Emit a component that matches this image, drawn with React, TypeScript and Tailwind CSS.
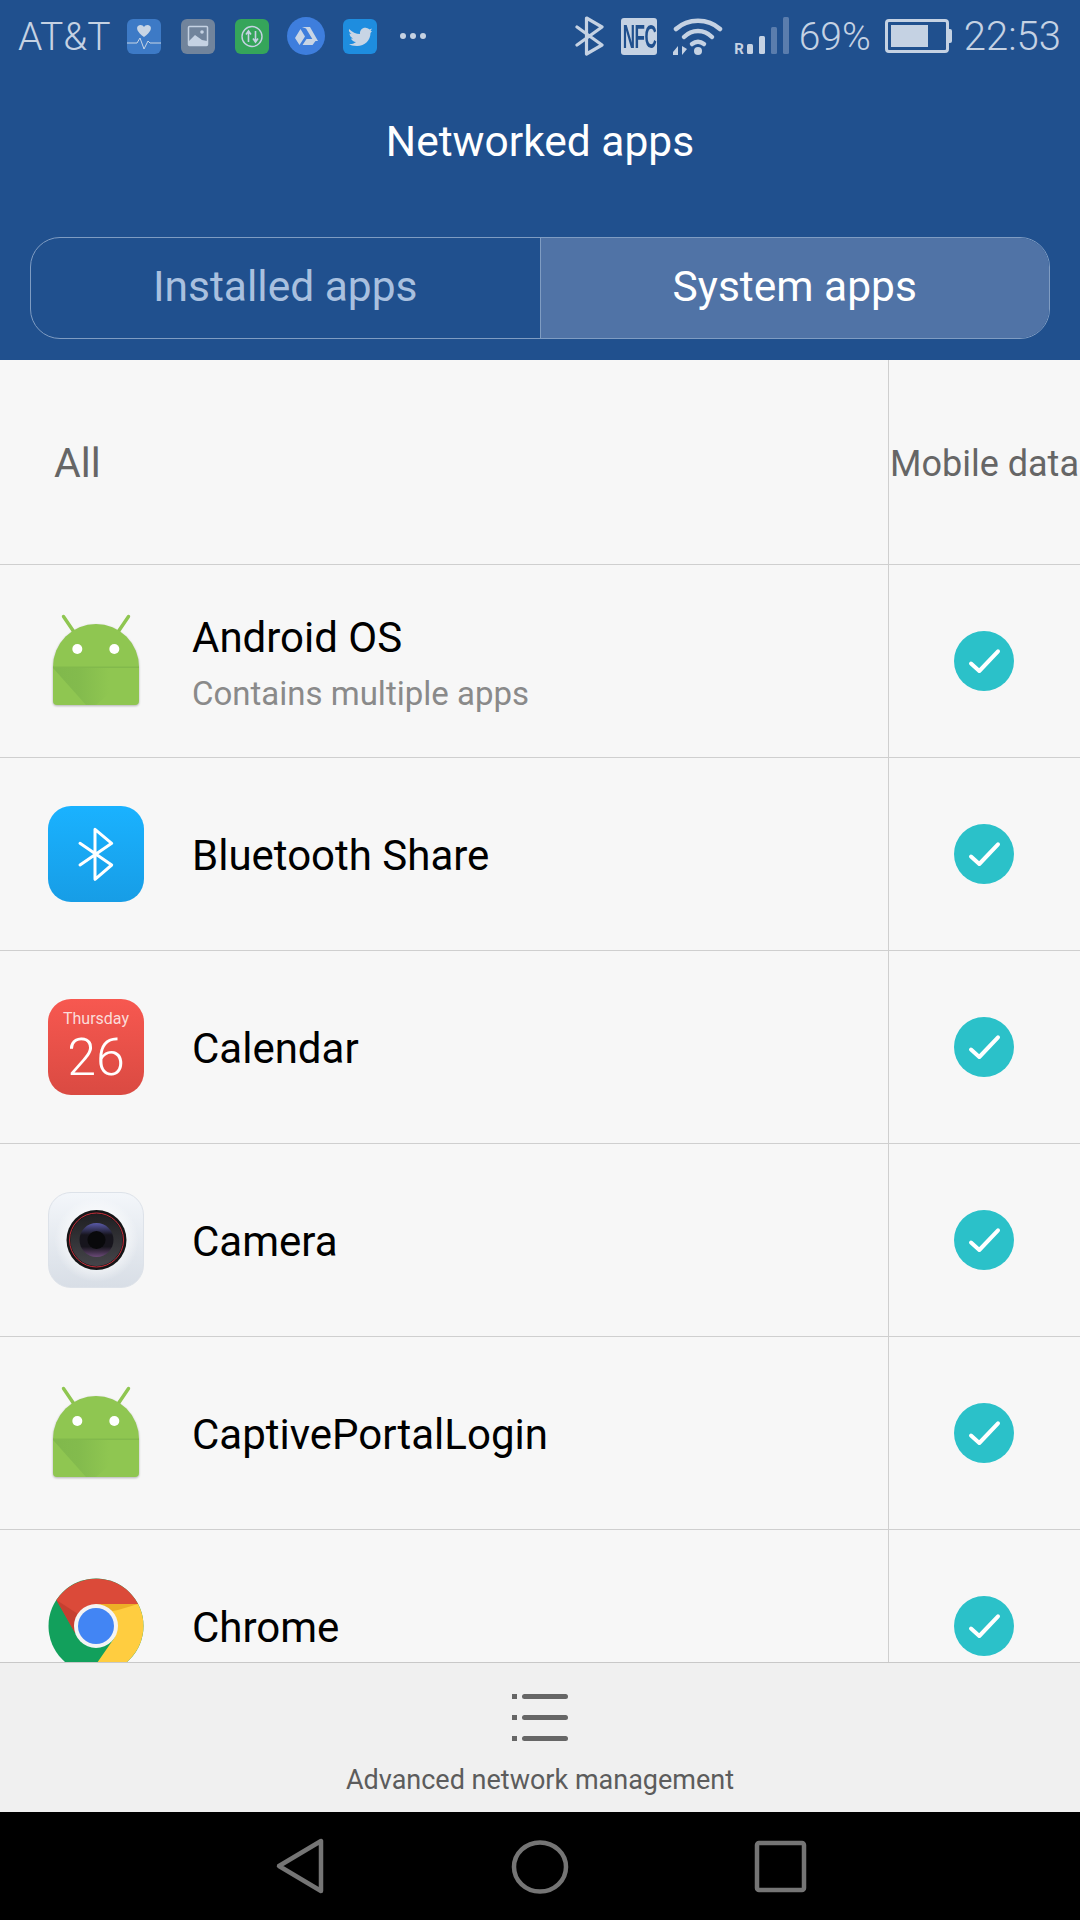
import React from "react";

function AndroidIcon() {
  return (
    <svg width="96" height="96" viewBox="0 0 96 96" fill="none">
      <defs>
        <linearGradient id="fold" x1="0" y1="0" x2="1" y2="0">
          <stop offset="0%" stopColor="#80b84c" />
          <stop offset="30%" stopColor="#83bb4d" />
          <stop offset="65%" stopColor="#8fc651" />
        </linearGradient>
      </defs>
      <path d="M15.5 3.5 L26 19 M80.5 3.5 L70 19" stroke="#8fc651" strokeWidth="3.4" strokeLinecap="round" />
      <g className="drop-shadow-[0_1px_1px_rgba(0,0,0,0.28)]">
        <path d="M5 54 A43 43 0 0 1 91 54 V88 A4 4 0 0 1 87 92 H9 A4 4 0 0 1 5 88 Z" fill="#8fc651" />
      </g>
      <path d="M5 55 H91 L48 92 H38 Z" fill="url(#fold)" />
      <rect x="5" y="53.5" width="86" height="1.5" fill="#82b94c" />
      <circle cx="29.3" cy="36" r="5" fill="#fff" />
      <circle cx="66.3" cy="36" r="5" fill="#fff" />
    </svg>
  );
}

function BluetoothIcon() {
  return (
    <div className="w-[96px] h-[96px] rounded-[23px] bg-gradient-to-b from-[#1ab2ff] to-[#179de6]">
      <svg width="96" height="96" viewBox="0 0 96 96" fill="none">
        <path d="M32 37.3 L63.7 59 L47 73.3 V23.3 L63.7 37.3 L32 59" stroke="#fff" strokeWidth="3" strokeLinecap="round" strokeLinejoin="round" />
      </svg>
    </div>
  );
}

function CalendarIcon() {
  return (
    <div className="w-[96px] h-[96px] rounded-[23px] bg-gradient-to-b from-[#f75850] to-[#da4a42] flex flex-col items-center text-white">
      <span className="text-[16px] leading-[20px] mt-[10px] text-[#fbdcd9]">Thursday</span>
      <span className="text-[52px] leading-[50px] font-light mt-[4px]">26</span>
    </div>
  );
}

function CameraIcon() {
  return (
    <div className="w-[96px] h-[96px] rounded-[23px] border border-[#dde2e9] bg-gradient-to-b from-[#f3f6fa] to-[#d8dee6]">
      <svg width="94" height="94" viewBox="0 0 94 94" fill="none">
        <defs>
          <radialGradient id="halo" cx="50%" cy="50%" r="50%">
            <stop offset="70%" stopColor="#ffffff" stopOpacity="0.5" />
            <stop offset="100%" stopColor="#ffffff" stopOpacity="0" />
          </radialGradient>
          <linearGradient id="ring" x1="0" y1="0" x2="0" y2="1">
            <stop offset="0%" stopColor="#1f1f22" />
            <stop offset="100%" stopColor="#45454a" />
          </linearGradient>
          <linearGradient id="glass" x1="0" y1="0" x2="0" y2="1">
            <stop offset="0%" stopColor="#5a5aa8" />
            <stop offset="35%" stopColor="#17151d" />
            <stop offset="70%" stopColor="#17151d" />
            <stop offset="100%" stopColor="#6b4a78" />
          </linearGradient>
        </defs>
        <circle cx="47.5" cy="47" r="42" fill="url(#halo)" />
        <circle cx="47.5" cy="47" r="30" fill="#151517" />
        <circle cx="47.5" cy="47" r="26" fill="url(#ring)" />
        <circle cx="47.5" cy="47" r="27" stroke="#c8303c" strokeWidth="1" />
        <circle cx="47.5" cy="47" r="17" fill="url(#glass)" />
        <circle cx="47.5" cy="47" r="9" fill="#09090b" />
      </svg>
    </div>
  );
}

function ChromeIcon() {
  return (
    <svg width="96" height="96" viewBox="0 0 96 96" fill="none">
      <circle cx="48" cy="48" r="47.5" fill="#12a05c" />
      <path d="M90.1 26 A47.5 47.5 0 0 1 42 95.1 L67 59 L48 26 Z" fill="#ffcd40" />
      <path d="M8.4 22 A47.5 47.5 0 0 1 90.1 26 H48 L27 55 Z" fill="#db4a39" />
      <path d="M8.4 22 L27 55 L30 36 Z" fill="#b8392c" opacity="0.6" />
      <path d="M48 26 H90.1 L70 32 L60 34 Z" fill="#e8a820" opacity="0.8" />
      <circle cx="48" cy="48" r="22" fill="#f4f4f4" />
      <circle cx="48" cy="48" r="18" fill="#4285f4" />
    </svg>
  );
}

function Check() {
  return (
    <svg width="60" height="60" viewBox="0 0 60 60" fill="none">
      <circle cx="30" cy="30" r="30" fill="#2bc1c9" />
      <path d="M17 32.6 L25.3 40 L44 20.3" stroke="#fff" strokeWidth="4" strokeLinecap="round" strokeLinejoin="round" />
    </svg>
  );
}

// small tinted notification icons, left side of the status bar
function StatusLeft() {
  return (
    <div className="flex items-center">
      <span className="text-[39px] leading-none text-[#c5d2e3] font-light ml-[18px] w-[109px] mt-[2px]">AT&amp;T</span>
      <svg width="34" height="35" viewBox="0 0 34 35" className="mr-[20px]">
        <rect width="34" height="35" rx="6" fill="#3d7ac6" />
        <path d="M17 18 C10 13 9 9 11 7 C13 5 16 6 17 8 C18 6 21 5 23 7 C25 9 24 13 17 18 Z" fill="#c8d5e5" />
        <path d="M0 24 H10 L13 19 L17 30 L21 22 L23 24 H34" stroke="#c8d5e5" strokeWidth="1" fill="none" />
      </svg>
      <svg width="34" height="35" viewBox="0 0 34 35" className="mr-[20px]">
        <rect width="34" height="35" rx="6" fill="#71849c" />
        <rect x="7.5" y="7.5" width="19" height="19" rx="1" stroke="#c5d2e3" strokeWidth="1.5" fill="none" />
        <path d="M8 26 V22 L14 16 L21 21 L26 22 V26 Z" fill="#c5d2e3" />
        <circle cx="21" cy="13" r="1.8" fill="#c5d2e3" />
      </svg>
      <svg width="34" height="35" viewBox="0 0 34 35" className="mr-[18px]">
        <rect width="34" height="35" rx="6" fill="#35a55a" />
        <circle cx="17" cy="17.5" r="10" stroke="#c5d2e3" strokeWidth="1.4" fill="none" />
        <path d="M13.5 23 V13 M11 15.5 L13.5 12 L16 15.5 M20.5 12 V22 M18 19.5 L20.5 23 L23 19.5" stroke="#c5d2e3" strokeWidth="1.6" fill="none" />
      </svg>
      <svg width="38" height="38" viewBox="0 0 38 38" className="mr-[18px]">
        <circle cx="19" cy="19" r="19" fill="#3e7edd" />
        <path d="M15 10 H23 L31 24 H26.5 L19 11.5 Z M13.5 12 L18 19.5 L12.5 28 L8 21 Z M19.5 22 H30 L25.5 28 H15.5 Z" fill="#c8d5e5" />
      </svg>
      <svg width="34" height="35" viewBox="0 0 34 35" className="mr-[23px]">
        <rect width="34" height="35" rx="6" fill="#1e8ddf" />
        <path d="M6 10 C9 13 13 15 17 15 C16.5 11 20 8 23.5 9 C25 9.2 26 10 26.5 10.5 L29 9.5 L27.5 12 L29 12 L27.5 14 C27.5 21 22 27 14 27 C10 27 7.5 26 6 25 C9 25.3 11.5 24.5 13 23 C10.5 23 8.5 21 8 19.5 L10 19.5 C8 18.5 6.5 16.5 6.5 14.5 L8.5 15 C6.5 13.5 5.5 12 6 10 Z" fill="#c8d5e5" />
      </svg>
      <div className="flex gap-[4px]">
        <span className="w-[6px] h-[6px] rounded-full bg-[#c5d2e3]" />
        <span className="w-[6px] h-[6px] rounded-full bg-[#c5d2e3]" />
        <span className="w-[6px] h-[6px] rounded-full bg-[#c5d2e3]" />
      </div>
    </div>
  );
}

function StatusRight() {
  return (
    <div className="flex items-center text-[#c5d2e3] pr-[19px]">
      <svg width="29" height="40" viewBox="0 0 29 40" fill="none" className="mr-[17px]">
        <path d="M2 11 L27 29 L11.5 38 V2 L27 11 L2 29" stroke="#c5d2e3" strokeWidth="3.2" strokeLinecap="round" strokeLinejoin="round" />
      </svg>
      <div className="w-[36px] h-[37px] rounded-[3px] bg-[#c5d2e3] mr-[16px] flex items-center justify-center overflow-hidden">
        <span className="text-[#20508e] text-[34px] leading-none font-['Liberation_Sans',sans-serif] font-bold scale-x-[0.5] tracking-[-1px] whitespace-nowrap">NFC</span>
      </div>
      <svg width="50" height="39" viewBox="0 0 50 39" fill="none" className="mr-[11px]">
        <path d="M3 12 C15 1 35 1 47 12" stroke="#c5d2e3" strokeWidth="4.5" strokeLinecap="round" />
        <path d="M11 20 C19 12 31 12 39 20" stroke="#c5d2e3" strokeWidth="4.5" strokeLinecap="round" />
        <path d="M19 27 C23 24 27 24 31 27" stroke="#c5d2e3" strokeWidth="4.5" strokeLinecap="round" />
        <circle cx="25" cy="34" r="4" fill="#c5d2e3" />
        <path d="M0 35 L5 29 V38 H0 Z M9 29 L14 32 L9 38 Z" fill="#c5d2e3" />
      </svg>
      <div className="flex items-end h-[40px] mr-[10px] relative">
        <span className="text-[15px] leading-none font-bold mr-[3px] mb-[-1px]">R</span>
        <span className="w-[6px] h-[10px] rounded-[1.5px] bg-[#c5d2e3] mr-[6px] mb-[2px]" />
        <span className="w-[6px] h-[18px] rounded-[1.5px] bg-[#c5d2e3] mr-[6px] mb-[2px]" />
        <span className="w-[6px] h-[27px] rounded-[1.5px] bg-[#5a7dad] mr-[6px] mb-[2px]" />
        <span className="w-[6px] h-[37px] rounded-[1.5px] bg-[#5a7dad] mb-[2px]" />
      </div>
      <span className="text-[39px] leading-none font-light mr-[14px] mt-[2px]">69%</span>
      <div className="flex items-center mr-[12px]">
        <div className="w-[64px] h-[34px] rounded-[4px] border-[3px] border-[#c5d2e3] p-[3px]">
          <div className="w-[37px] h-full bg-[#c5d2e3]" />
        </div>
        <span className="w-[3px] h-[14px] bg-[#c5d2e3] rounded-r-[2px]" />
      </div>
      <span className="text-[40px] leading-none font-light mt-[2px]">22:53</span>
    </div>
  );
}

function Row({ icon, name, sub }: { icon: React.ReactNode; name: string; sub?: string }) {
  return (
    <div className="flex h-[193px] shrink-0 border-b border-[#cfcfcf]">
      <div className="flex-1 flex items-center pl-[48px]">
        <div className="w-[96px] h-[96px] mr-[48px]">{icon}</div>
        <div className="pt-[3px]">
          <div className="text-[42px] leading-[56px] text-black">{name}</div>
          {sub && <div className="text-[33px] leading-[40px] text-[#8a8a8a] mt-[8px] mb-[2px]">{sub}</div>}
        </div>
      </div>
      <div className="w-[192px] border-l border-[#cfcfcf] flex items-center justify-center pr-[1px]">
        <Check />
      </div>
    </div>
  );
}

export default function App() {
  return (
    <div className="w-[1080px] h-[1920px] flex flex-col bg-[#f7f7f7] font-[Roboto,sans-serif] overflow-hidden">
      {/* blue header */}
      <div className="h-[360px] shrink-0 bg-[#20508e] flex flex-col">
        <div className="h-[72px] shrink-0 flex items-center justify-between">
          <StatusLeft />
          <StatusRight />
        </div>
        <div className="h-[140px] shrink-0 flex items-center justify-center text-white text-[42.5px]">Networked apps</div>
        <div className="mx-[30px] mt-[25px] h-[102px] flex rounded-[30px] border border-[#7f9cc2] overflow-hidden text-[42.5px]">
          <div className="flex-1 flex items-center justify-center text-[#a9c0df] pb-[3px]">Installed apps</div>
          <div className="flex-1 flex items-center justify-center text-white bg-[#5073a6] border-l border-[#7f9cc2] pb-[3px]">System apps</div>
        </div>
      </div>

      {/* list */}
      <div className="flex-1 min-h-0 overflow-hidden flex flex-col">
        <div className="flex h-[205px] shrink-0 border-b border-[#cfcfcf] text-[#666666]">
          <div className="flex-1 flex items-center pl-[54px] pt-[3px] text-[41px]">All</div>
          <div className="w-[192px] border-l border-[#cfcfcf] flex items-center justify-center pt-[3px] text-[36px] whitespace-nowrap">Mobile data</div>
        </div>
        <Row icon={<AndroidIcon />} name="Android OS" sub="Contains multiple apps" />
        <Row icon={<BluetoothIcon />} name="Bluetooth Share" />
        <Row icon={<CalendarIcon />} name="Calendar" />
        <Row icon={<CameraIcon />} name="Camera" />
        <Row icon={<AndroidIcon />} name="CaptivePortalLogin" />
        <Row icon={<ChromeIcon />} name="Chrome" />
      </div>

      {/* bottom action */}
      <div className="h-[150px] shrink-0 bg-[#f0f0f0] border-t border-[#c8c8c8] flex flex-col items-center">
        <svg width="56" height="50" viewBox="0 0 56 50" className="mt-[28px]">
          <rect x="0" y="3" width="5" height="5" fill="#666" />
          <rect x="10" y="3" width="46" height="5" rx="2.5" fill="#666" />
          <rect x="0" y="24" width="5" height="5" fill="#666" />
          <rect x="10" y="24" width="46" height="5" rx="2.5" fill="#666" />
          <rect x="0" y="45" width="5" height="5" fill="#666" />
          <rect x="10" y="45" width="46" height="5" rx="2.5" fill="#666" />
        </svg>
        <div className="text-[27px] leading-[32px] text-[#5c5c5c] mt-[23px]">Advanced network management</div>
      </div>

      {/* nav bar */}
      <div className="h-[108px] shrink-0 bg-black flex items-center">
        <svg width="1080" height="108" viewBox="0 0 1080 108" fill="none" stroke="#757575" strokeWidth="4.5" strokeLinejoin="round">
          <path d="M279 54 L321 29 V79 Z" />
          <ellipse cx="540" cy="55" rx="26" ry="24.5" />
          <rect x="757" y="31" width="47" height="47" rx="2" />
        </svg>
      </div>
    </div>
  );
}
